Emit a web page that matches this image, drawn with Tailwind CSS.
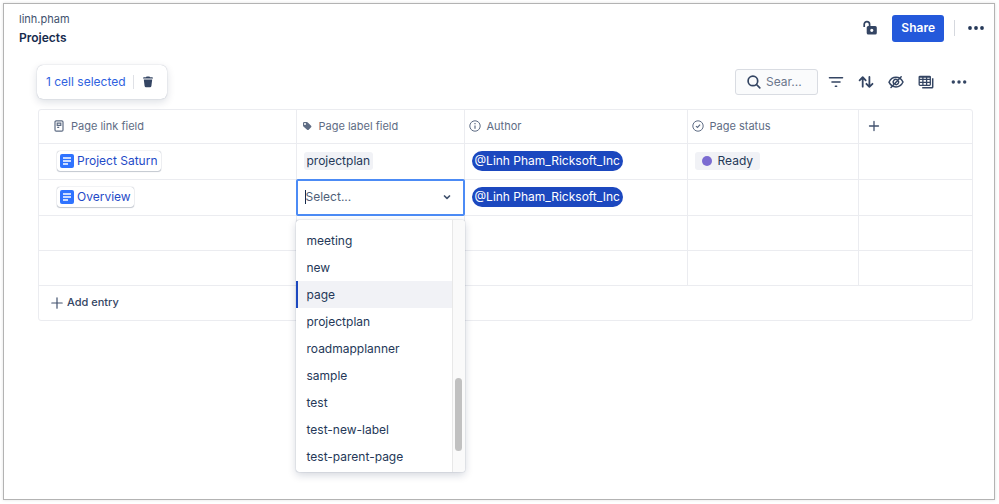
<!DOCTYPE html>
<html lang="en">
<head>
<meta charset="utf-8">
<meta name="viewport" content="width=device-width, initial-scale=1">
<title>Projects</title>
<script src="https://cdn.jsdelivr.net/npm/@tailwindcss/browser@4"></script>
</head>
<body class="flex min-h-screen bg-white pt-[3px] pr-1 pb-1 pl-[3px] font-['Inter',sans-serif] text-xs text-[#253858]">
<div class="flex flex-1 flex-col border border-[#b3b3b3] shadow-[0_0_3px_rgba(0,0,0,0.12)]">
  <header class="flex items-center justify-between pt-[5px] pr-[9px] pl-[15px]">
    <div>
      <a href="#" class="block text-[11px] leading-5 text-[#42526e]">linh.pham</a>
      <h1 class="text-xs leading-[18px] font-semibold text-[#172b4d]">Projects</h1>
    </div>
    <div class="flex items-center">
      <button type="button" aria-label="Restrictions" class="mr-3.5">
        <svg class="size-4" viewBox="0 0 16 16" fill="none"><path d="M2.200 7V4.300a2.700 2.700 0 0 1 5.400 0v2.400" stroke="#344563" stroke-width="1.700"/><path fill-rule="evenodd" d="M6.300 6h6.900a1.600 1.600 0 0 1 1.600 1.600v5.300a1.600 1.600 0 0 1-1.600 1.600H6.300a1.600 1.600 0 0 1-1.600-1.600V7.600a1.600 1.600 0 0 1 1.600-1.600Zm3.500 2.700a1.600 1.600 0 1 0 0 3.200 1.600 1.600 0 0 0 0-3.200Z" fill="#344563"/></svg>
      </button>
      <button type="button" class="h-[27px] rounded-[3px] bg-[#2459db] px-[9px] text-xs font-semibold text-white">Share</button>
      <span class="ml-2.5 h-4 w-px bg-[#d5d8de]"></span>
      <button type="button" aria-label="More actions" class="ml-3">
        <svg class="h-4 w-[18px]" viewBox="0 0 18 16" fill="#253858"><circle cx="3" cy="8" r="1.900"/><circle cx="9" cy="8" r="1.900"/><circle cx="15" cy="8" r="1.900"/></svg>
      </button>
    </div>
  </header>

  <main class="pt-[18px] pr-[21px] pl-[34px]">
    <div class="flex items-center justify-between pb-2.5">
      <div class="-ml-px flex h-[34px] items-center rounded-md bg-white pr-3 pl-[9px] shadow-[0_0_1px_rgba(9,30,66,0.35),0_3px_9px_rgba(9,30,66,0.14)]">
        <span class="text-xs text-[#2f62e0]">1 cell selected</span>
        <span class="mx-[7px] h-3.5 w-px bg-[#dfe1e6]"></span>
        <button type="button" aria-label="Delete">
          <svg class="size-3.5" viewBox="0 0 14 14" fill="#344563"><path d="M2 3.200Q2 2.200 3 2.200H4.900Q5.100 1.400 5.900 1.400H8.100Q8.900 1.400 9.100 2.200H11Q12 2.200 12 3.200V3.600H2ZM2.800 4.500H11.200L10.400 11.100Q10.200 12.300 9 12.300H5Q3.800 12.300 3.600 11.100Z"/></svg>
        </button>
      </div>
      <div class="flex items-center pr-[3px]">
        <label class="mr-2.5 flex h-[26px] w-[83px] items-center rounded-[3px] border border-[#d9dce2] bg-[#fafbfc] pl-2.5">
          <svg class="size-4 shrink-0" viewBox="0 0 16 16" fill="none" stroke="#344563" stroke-width="1.700" stroke-linecap="round"><circle cx="6.900" cy="6.900" r="4.800"/><path d="m10.500 10.500 3.300 3.300"/></svg>
          <input type="search" aria-label="Search" placeholder="Sear..." class="ml-1 w-0 min-w-0 flex-1 bg-transparent text-xs outline-none placeholder:text-[#6b778c]">
        </label>
        <div class="flex items-center gap-3.5">
          <button type="button" aria-label="Filter"><svg class="size-4" viewBox="0 0 16 16" fill="none" stroke="#344563" stroke-width="1.600" stroke-linecap="round"><path d="M1.500 3.700h13M4 8h8M7.400 12.200h1.200"/></svg></button>
          <button type="button" aria-label="Sort"><svg class="size-4" viewBox="0 0 16 16" fill="none" stroke="#344563" stroke-width="1.800" stroke-linecap="round" stroke-linejoin="round"><path d="M4.700 12.700V3.500M1.600 6.300l3.100-3.200 3 3.200M11.400 3v9.600M8.400 9.800l3 3.100 3.100-3.100"/></svg></button>
          <button type="button" aria-label="Hide fields"><svg class="size-4" viewBox="0 0 16 16" fill="none" stroke="#344563" stroke-width="1.500" stroke-linecap="round"><path d="M1 8.200C2.500 5 5 3.300 8 3.300s5.500 1.600 7 4.700c-1.500 3.200-4 4.900-7 4.900S2.500 11.300 1 8.200Z"/><path d="M5.500 9.300A2.600 2.600 0 0 1 9 5.700M10.600 7.500A2.600 2.600 0 0 1 7.700 10.600M13.200 2.700 3 13.400"/></svg></button>
          <button type="button" aria-label="Table layout"><svg class="size-4" viewBox="0 0 16 16" fill="none" stroke="#344563" stroke-width="1.300"><rect x="1.200" y="2.300" width="11.100" height="9" rx=".8"/><path d="M1 3.200h11.500M1.200 5.400h11M1.200 8.300h11M4.900 3v8.300M8.600 3v8.300"/><path d="M14.700 4.200v8.800q0 .8-.8.800H4.200" stroke-width="1.500"/></svg></button>
          <button type="button" aria-label="More" class="mx-0.5"><svg class="h-4 w-[18px]" viewBox="0 0 18 16" fill="#344563"><circle cx="3.300" cy="8" r="1.700"/><circle cx="9" cy="8" r="1.700"/><circle cx="14.700" cy="8" r="1.700"/></svg></button>
        </div>
      </div>
    </div>

    <div class="rounded-[3px] border border-[#ebecf0]">
      <table class="w-full table-fixed border-collapse text-left">
        <colgroup><col class="w-[257px]"><col class="w-[168px]"><col class="w-[223px]"><col class="w-[171px]"><col></colgroup>
        <thead>
          <tr class="h-[33px] divide-x divide-[#ebecf0] border-b border-[#ebecf0] text-[11px] text-[#5e6c84]">
            <th scope="col" class="pl-3.5 font-normal"><div class="flex items-center gap-1.5">
              <svg class="size-3" viewBox="0 0 12 12" fill="none" stroke="#5e6c84" stroke-width="1.200"><rect x="2" y=".8" width="8" height="10.400" rx="1.200"/><path d="M4.200 3.200h3.600v2.100H4.200ZM4.200 7.300h2"/></svg>Page link field</div></th>
            <th scope="col" class="pl-1 font-normal"><div class="flex items-center gap-1.5">
              <svg class="size-3" viewBox="0 0 12 12"><path fill="#5e6c84" fill-rule="evenodd" d="M2 3.200q0-1.200 1.200-1.200h2.600q.6 0 1 .4l3.300 3.300q.8.800 0 1.600L7.700 9.700q-.8.800-1.600 0L2.400 6.400Q2 6 2 5.400Zm2-.2a1 1 0 1 0 0 2 1 1 0 0 0 0-2Z"/></svg>Page label field</div></th>
            <th scope="col" class="pl-1 font-normal"><div class="flex items-center gap-1.5">
              <svg class="size-3" viewBox="0 0 12 12" fill="none" stroke="#5e6c84"><circle cx="6" cy="6" r="5.200"/><path d="M6 5.400v3.300M6 3v1.200" stroke-width="1.200"/></svg>Author</div></th>
            <th scope="col" class="pl-1 font-normal"><div class="flex items-center gap-1.5">
              <svg class="size-3" viewBox="0 0 12 12" fill="none" stroke="#5e6c84"><circle cx="6" cy="6" r="5.200"/><path d="m4 6.100 1.500 1.400 2.600-2.800" stroke-width="1.200"/></svg>Page status</div></th>
            <th scope="col" class="pl-[9px]"><button type="button" aria-label="Add field" class="block"><svg class="size-3" viewBox="0 0 12 12" stroke="#42526e" stroke-width="1.300" stroke-linecap="round"><path d="M6 1.500v9M1.500 6h9"/></svg></button></th>
          </tr>
        </thead>
        <tbody>
          <tr class="h-9 divide-x divide-[#ebecf0] border-b border-[#ebecf0]">
            <td class="pl-[18px]"><a href="#" class="flex h-5 w-fit items-center gap-[3px] rounded-[3px] bg-white px-[3px] text-xs text-[#1f4bc8] shadow-[0_0_1px_rgba(9,30,66,0.5),0_1px_1px_rgba(9,30,66,0.2)]"><svg class="size-3.5" viewBox="0 0 14 14"><rect width="14" height="14" rx="2" fill="#2f73ff"/><path d="M3 4h8M3 7h8M3 10h5" stroke="#fff" stroke-width="1.500"/></svg>Project Saturn</a></td>
            <td class="pl-[7px]"><span class="flex h-[18px] w-fit items-center rounded-[3px] bg-[#f1f2f6] px-[3px]">projectplan</span></td>
            <td class="pl-[7px]"><a href="#" class="flex h-5 w-fit items-center rounded-full bg-[#1c48bf] px-[3px] text-white">@Linh Pham_Ricksoft_Inc</a></td>
            <td class="pl-[7px]"><span class="flex h-[18px] w-fit items-center gap-1.5 rounded-[3px] bg-[#f1f2f6] px-[7px]"><span class="size-2.5 rounded-full bg-[#7b6bd1]"></span>Ready</span></td>
            <td></td>
          </tr>
          <tr class="h-9 divide-x divide-[#ebecf0] border-b border-[#ebecf0]">
            <td class="pl-[18px]"><a href="#" class="flex h-5 w-fit items-center gap-[3px] rounded-[3px] bg-white px-[3px] text-xs text-[#1f4bc8] shadow-[0_0_1px_rgba(9,30,66,0.5),0_1px_1px_rgba(9,30,66,0.2)]"><svg class="size-3.5" viewBox="0 0 14 14"><rect width="14" height="14" rx="2" fill="#2f73ff"/><path d="M3 4h8M3 7h8M3 10h5" stroke="#fff" stroke-width="1.500"/></svg>Overview</a></td>
            <td class="relative">
              <div class="absolute -inset-px flex items-center rounded-[2px] border-2 border-[#4c8bf5] bg-white pr-2.5 pl-[7px]">
                <span class="h-3.5 w-px shrink-0 bg-[#172b4d]"></span>
                <input type="text" role="combobox" aria-expanded="true" aria-controls="label-options" aria-label="Page label" placeholder="Select..." class="w-0 min-w-0 flex-1 bg-transparent text-xs outline-none placeholder:text-[#505f79]">
                <svg class="size-3 shrink-0" viewBox="0 0 12 12" fill="none" stroke="#42526e" stroke-width="1.700" stroke-linecap="round" stroke-linejoin="round"><path d="m3.500 5 2.500 2.400L8.500 5"/></svg>
              </div>
              <div class="absolute top-full -right-px -left-px z-10 mt-[5px] flex overflow-hidden rounded-[3px] bg-white shadow-[0_0_1px_rgba(9,30,66,0.5),0_3px_8px_rgba(9,30,66,0.18)]">
                <ul id="label-options" role="listbox" aria-label="Labels" class="min-w-0 flex-1 pt-[7px] pb-0.5 leading-[27px] text-[#253858]">
                  <li role="option" class="border-l-2 border-transparent pl-[9px]">meeting</li>
                  <li role="option" class="border-l-2 border-transparent pl-[9px]">new</li>
                  <li role="option" aria-selected="true" class="border-l-2 border-[#1c48bf] bg-[#f1f2f6] pl-[9px]">page</li>
                  <li role="option" class="border-l-2 border-transparent pl-[9px]">projectplan</li>
                  <li role="option" class="border-l-2 border-transparent pl-[9px]">roadmapplanner</li>
                  <li role="option" class="border-l-2 border-transparent pl-[9px]">sample</li>
                  <li role="option" class="border-l-2 border-transparent pl-[9px]">test</li>
                  <li role="option" class="border-l-2 border-transparent pl-[9px]">test-new-label</li>
                  <li role="option" class="border-l-2 border-transparent pl-[9px]">test-parent-page</li>
                </ul>
                <div class="flex w-[13px] flex-col items-center justify-end border-l border-[#e8e8e8] bg-[#fafafa] pb-[21px]"><span class="h-[73px] w-[7px] rounded-full bg-[#c1c1c1]"></span></div>
              </div>
            </td>
            <td class="pl-[7px]"><a href="#" class="flex h-5 w-fit items-center rounded-full bg-[#1c48bf] px-[3px] text-white">@Linh Pham_Ricksoft_Inc</a></td>
            <td></td><td></td>
          </tr>
          <tr class="h-[35px] divide-x divide-[#ebecf0] border-b border-[#ebecf0]"><td></td><td></td><td></td><td></td><td></td></tr>
          <tr class="h-[35px] divide-x divide-[#ebecf0] border-b border-[#ebecf0]"><td></td><td></td><td></td><td></td><td></td></tr>
        </tbody>
      </table>
      <button type="button" class="flex h-[34px] items-center gap-1 pl-3 text-[11px] font-medium text-[#344563]"><svg class="size-3" viewBox="0 0 12 12" stroke="#42526e" stroke-width="1.200" stroke-linecap="round"><path d="M6 .8v10.400M.8 6h10.400"/></svg>Add entry</button>
    </div>
  </main>
</div>
</body>
</html>
